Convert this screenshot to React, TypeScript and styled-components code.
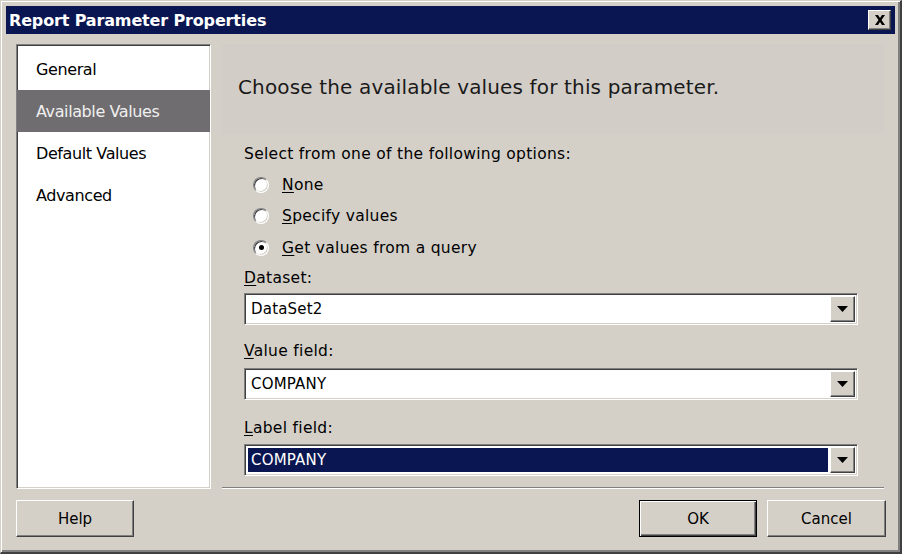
import React from "react";
import styled, { createGlobalStyle, css } from "styled-components";

const Global = createGlobalStyle`
  html, body { margin: 0; padding: 0; background: #d4d0c8; }
  body { font-family: "DejaVu Sans", "Liberation Sans", sans-serif; }
  * { box-sizing: border-box; }
`;

const FACE = "#d4d0c8";
const NAVY = "#0a1651";

const raised = css`
  border-top: 1px solid #ffffff;
  border-left: 1px solid #ffffff;
  border-right: 1px solid #404040;
  border-bottom: 1px solid #404040;
  box-shadow: inset -1px -1px 0 #808080, inset 1px 1px 0 ${FACE};
`;

const sunken = css`
  border-top: 1px solid #808080;
  border-left: 1px solid #808080;
  border-right: 1px solid #ffffff;
  border-bottom: 1px solid #ffffff;
  box-shadow: inset 1px 1px 0 #404040, inset -1px -1px 0 ${FACE};
`;

const Window = styled.div`
  width: 902px;
  height: 554px;
  background: ${FACE};
  border-top: 1px solid ${FACE};
  border-left: 1px solid ${FACE};
  border-right: 2px solid #404040;
  border-bottom: 2px solid #404040;
  box-shadow: inset 1px 1px 0 #ffffff, inset -2px -2px 0 #808080;
  display: flex;
  flex-direction: column;
  padding: 5px 5px 0 5px;
`;

const TitleBar = styled.div`
  height: 28px;
  background: ${NAVY};
  display: flex;
  align-items: center;
  justify-content: space-between;
  padding: 0 4px 0 3px;
`;

const Title = styled.span`
  color: #ffffff;
  font-family: "DejaVu Sans", sans-serif;
  font-weight: bold;
  font-size: 16px;
  letter-spacing: -0.15px;
`;

const CloseButton = styled.div`
  width: 23px;
  height: 20px;
  background: ${FACE};
  ${raised};
  display: flex;
  align-items: center;
  justify-content: center;
`;

const Body = styled.div`
  display: flex;
  gap: 11px;
  padding: 10px 0 0 10px;
`;

const NavList = styled.div`
  width: 195px;
  height: 445px;
  background: #ffffff;
  ${sunken};
  padding-top: 3px;
  display: flex;
  flex-direction: column;
`;

const NavItem = styled.div<{ $active?: boolean }>`
  height: 42px;
  display: flex;
  align-items: center;
  padding-left: 19px;
  font-size: 16px;
  letter-spacing: -0.4px;
  color: ${(p) => (p.$active ? "#f0f0f0" : "#000000")};
  background: ${(p) => (p.$active ? "#6f6d6f" : "transparent")};
`;

const RightColumn = styled.div`
  width: 662px;
  height: 445px;
  display: flex;
  flex-direction: column;
`;

const Header = styled.div`
  height: 90px;
  background: #d3cdc8;
  display: flex;
  align-items: center;
  padding: 0 0 4px 16px;
  font-size: 20px;
  letter-spacing: 0.15px;
  color: #1a1a1a;
`;

const Content = styled.div`
  flex: 1;
  padding: 10px 0 0 22px;
  display: flex;
  flex-direction: column;
  font-size: 15.5px;
  letter-spacing: 0.3px;
  color: #000;
`;

const Label = styled.div<{ $top?: number }>`
  height: 20px;
  line-height: 20px;
  margin-top: ${(p) => p.$top ?? 0}px;
`;

const RadioGroup = styled.div`
  display: flex;
  flex-direction: column;
  padding-left: 9px;
  margin-top: 5px;
`;

const RadioRow = styled.div`
  height: 31.5px;
  display: flex;
  align-items: center;
  gap: 13px;
`;

const RadioCircle = styled.span<{ $checked?: boolean }>`
  width: 16px;
  height: 16px;
  border-radius: 50%;
  background: #ffffff;
  border: 1px solid;
  border-color: #808080 #ffffff #ffffff #808080;
  box-shadow: inset 1px 1px 0 #404040, inset -1px -1px 0 #d4d0c8;
  display: flex;
  align-items: center;
  justify-content: center;
  &::after {
    content: "";
    width: 5px;
    height: 5px;
    border-radius: 50%;
    background: #000;
    display: ${(p) => (p.$checked ? "block" : "none")};
  }
`;

const Mn = styled.span`
  text-decoration: underline;
  text-underline-offset: 2px;
`;

const Combo = styled.div<{ $top?: number }>`
  width: 614px;
  height: 32px;
  margin-top: ${(p) => p.$top ?? 0}px;
  background: #ffffff;
  ${sunken};
  display: flex;
  align-items: stretch;
  padding: 2px;
  font-size: 15px;
  letter-spacing: 0.2px;
`;

const ComboText = styled.div<{ $selected?: boolean }>`
  flex: 1;
  display: flex;
  align-items: center;
  padding-left: 3px;
  margin-right: 1px;
  background: ${(p) => (p.$selected ? NAVY : "#fff")};
  color: ${(p) => (p.$selected ? "#fff" : "#000")};
  border: 1px solid ${(p) => (p.$selected ? "#ffffff" : "transparent")};
`;

const DropButton = styled.div`
  width: 25px;
  background: ${FACE};
  ${raised};
  display: flex;
  align-items: center;
  justify-content: center;
`;

const Separator = styled.div`
  height: 2px;
  border-top: 1px solid #808080;
  border-bottom: 1px solid #ffffff;
  margin-top: auto;
  margin-bottom: 0;
`;

const Footer = styled.div`
  display: flex;
  align-items: center;
  padding: 11px 0 0 10px;
  width: 880px;
`;

const Button = styled.div<{ $default?: boolean; $w?: number }>`
  width: ${(p) => p.$w ?? 118}px;
  height: 37px;
  background: ${FACE};
  display: flex;
  align-items: center;
  justify-content: center;
  font-size: 15px;
  color: #000;
  ${(p) =>
    p.$default
      ? css`
          border: 1px solid #000;
          box-shadow: inset 1px 1px 0 #fff, inset -1px -1px 0 #404040,
            inset -2px -2px 0 #808080;
        `
      : raised}
`;

const Spacer = styled.div`
  flex: 1;
`;

const ButtonGap = styled.div`
  width: 10px;
`;

const Arrow = () => (
  <svg width="11" height="6" viewBox="0 0 11 6">
    <path d="M0 0h11L5.5 6z" fill="#000" />
  </svg>
);

const CloseIcon = () => (
  <svg width="12" height="10" viewBox="0 0 12 10">
    <path d="M1 0h3l2 3 2-3h3L7.5 5 11 10H8L6 7 4 10H1l3.5-5z" fill="#000" />
  </svg>
);

export default function App() {
  return (
    <>
      <Global />
      <Window>
        <TitleBar>
          <Title>Report Parameter Properties</Title>
          <CloseButton>
            <CloseIcon />
          </CloseButton>
        </TitleBar>
        <Body>
          <NavList>
            <NavItem>General</NavItem>
            <NavItem $active>Available Values</NavItem>
            <NavItem>Default Values</NavItem>
            <NavItem>Advanced</NavItem>
          </NavList>
          <RightColumn>
            <Header>Choose the available values for this parameter.</Header>
            <Content>
              <Label>Select from one of the following options:</Label>
              <RadioGroup>
                <RadioRow>
                  <RadioCircle />
                  <span>
                    <Mn>N</Mn>one
                  </span>
                </RadioRow>
                <RadioRow>
                  <RadioCircle />
                  <span>
                    <Mn>S</Mn>pecify values
                  </span>
                </RadioRow>
                <RadioRow>
                  <RadioCircle $checked />
                  <span>
                    <Mn>G</Mn>et values from a query
                  </span>
                </RadioRow>
              </RadioGroup>
              <Label $top={4}>
                <Mn>D</Mn>ataset:
              </Label>
              <Combo $top={5}>
                <ComboText>DataSet2</ComboText>
                <DropButton>
                  <Arrow />
                </DropButton>
              </Combo>
              <Label $top={16}>
                <Mn>V</Mn>alue field:
              </Label>
              <Combo $top={7}>
                <ComboText>COMPANY</ComboText>
                <DropButton>
                  <Arrow />
                </DropButton>
              </Combo>
              <Label $top={18}>
                <Mn>L</Mn>abel field:
              </Label>
              <Combo $top={6}>
                <ComboText $selected>COMPANY</ComboText>
                <DropButton>
                  <Arrow />
                </DropButton>
              </Combo>
            </Content>
            <Separator />
          </RightColumn>
        </Body>
        <Footer>
          <Button>Help</Button>
          <Spacer />
          <Button $default>OK</Button>
          <ButtonGap />
          <Button $w={119}>Cancel</Button>
        </Footer>
      </Window>
    </>
  );
}
